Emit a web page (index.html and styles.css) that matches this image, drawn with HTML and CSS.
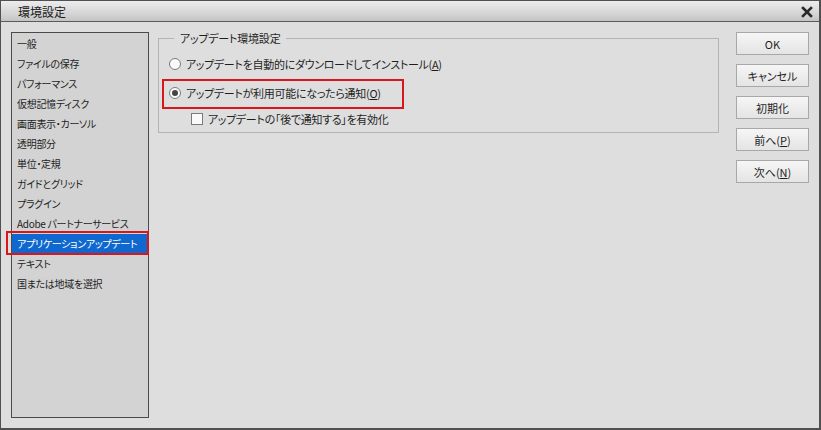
FILE: index.html
```html
<!DOCTYPE html>
<html lang="ja">
<head>
    <meta charset="UTF-8">
    <title>環境設定</title>
    <link rel="stylesheet" href="styles.css">
</head>
<body>
    <div class="window">
        <div class="titlebar">
            <span class="title">環境設定</span>
            <svg class="close" width="12" height="12" viewBox="0 0 12 12">
                <path d="M2 2 L10 10 M10 2 L2 10" stroke="#2a2a2a" stroke-width="2.6" stroke-linecap="square"/>
            </svg>
        </div>

        <div class="body">
            <!-- category list -->
            <ul class="list">
                <li>一般</li>
                <li>ファイルの保存</li>
                <li>パフォーマンス</li>
                <li>仮想記憶ディスク</li>
                <li>画面表示・カーソル</li>
                <li>透明部分</li>
                <li>単位・定規</li>
                <li>ガイドとグリッド</li>
                <li>プラグイン</li>
                <li>Adobe パートナーサービス</li>
                <li class="selected">アプリケーションアップデート</li>
                <li>テキスト</li>
                <li>国または地域を選択</li>
            </ul>

            <!-- settings -->
            <div class="main">
                <fieldset class="group">
                    <legend>アップデート環境設定</legend>
                    <div class="option">
                        <span class="radio"></span>
                        <span>アップデートを自動的にダウンロードしてインストール(<u>A</u>)</span>
                    </div>
                    <div class="option marked">
                        <span class="radio checked"></span>
                        <span>アップデートが利用可能になったら通知(<u>O</u>)</span>
                    </div>
                    <div class="option sub">
                        <span class="check"></span>
                        <span>アップデートの「後で通知する」を有効化</span>
                    </div>
                </fieldset>
            </div>

            <!-- buttons -->
            <div class="buttons">
                <button>OK</button>
                <button>キャンセル</button>
                <button>初期化</button>
                <button>前へ(<u>P</u>)</button>
                <button>次へ(<u>N</u>)</button>
            </div>
        </div>
    </div>
</body>
</html>
```

FILE: styles.css
```css
* {
    margin: 0;
    padding: 0;
    box-sizing: border-box;
}

body {
    font-family: "Noto Sans CJK JP", "Noto Sans", sans-serif;
    font-size: 11px;
    font-feature-settings: "palt";
    color: #1e1e1e;
    background: #dedede;
}

.window {
    width: 821px;
    height: 430px;
    border: 1px solid #505050;
    border-right-width: 2px;
    border-bottom-width: 2px;
    background: #dedede;
    display: flex;
    flex-direction: column;
}

.titlebar {
    height: 21px;
    background: linear-gradient(#ececec 0%, #d6d6d6 60%, #c4c4c4 100%);
    border-bottom: 1px solid #5a5a5a;
    display: flex;
    align-items: center;
    justify-content: space-between;
    padding: 0 6px 0 17px;
}

.title {
    font-size: 12px;
    color: #1a1a1a;
}

.close {
    margin-top: 1px;
}

.body {
    flex: 1;
    display: flex;
    padding: 10px;
}

.list {
    list-style: none;
    width: 138px;
    height: 386px;
    border: 1px solid #4a4a4a;
    background: #d3d3d3;
    padding-top: 1px;
}

.list li {
    position: relative;
    height: 20px;
    line-height: 20px;
    padding-left: 5px;
    white-space: nowrap;
    font-size: 10px;
    letter-spacing: -0.3px;
}

.list li.selected {
    background: #0f68cf;
    color: #ffffff;
    margin-right: 1px;
}

.list li.selected::after {
    content: "";
    position: absolute;
    left: -6px;
    right: -2px;
    top: -3px;
    bottom: -1px;
    border: 2px solid #d8161c;
}

.main {
    width: 562px;
    margin-left: 9px;
    margin-top: -2px;
}

.group {
    border: 1px solid #b4b4b4;
    height: 103px;
    padding: 9px 0 0 10px;
}

.group legend {
    margin-left: 5px;
    padding: 0 6px 0 6px;
    font-size: 11px;
    letter-spacing: -0.2px;
}

.option {
    position: relative;
    display: flex;
    align-items: center;
    gap: 4px;
    height: 18px;
    margin-bottom: 11px;
    font-size: 11px;
    letter-spacing: -0.3px;
    white-space: nowrap;
}

.option u {
    text-decoration: underline;
}

.option.marked::after {
    content: "";
    position: absolute;
    left: -7px;
    top: -5px;
    width: 238px;
    height: 26px;
    border: 2px solid #d8161c;
}

.option.sub {
    padding-left: 22px;
    margin-top: -3px;
}

.radio {
    width: 12px;
    height: 12px;
    border-radius: 50%;
    border: 1px solid #7a7a7a;
    background: #fafafa;
    display: flex;
    align-items: center;
    justify-content: center;
    margin-right: 1px;
}

.radio.checked::before {
    content: "";
    width: 6px;
    height: 6px;
    border-radius: 50%;
    background: #454545;
}

.check {
    width: 12px;
    height: 12px;
    border: 1px solid #7a7a7a;
    background: #fafafa;
    margin-right: 1px;
}

.buttons {
    margin-left: 17px;
    display: flex;
    flex-direction: column;
    gap: 9px;
}

button {
    width: 73px;
    height: 23px;
    font-family: "Noto Sans CJK JP", "Noto Sans", sans-serif;
    font-size: 11px;
    font-feature-settings: "palt";
    color: #1e1e1e;
    border: 1px solid #a8a8a8;
    background: linear-gradient(#f6f6f6, #e4e4e4);
}
```
